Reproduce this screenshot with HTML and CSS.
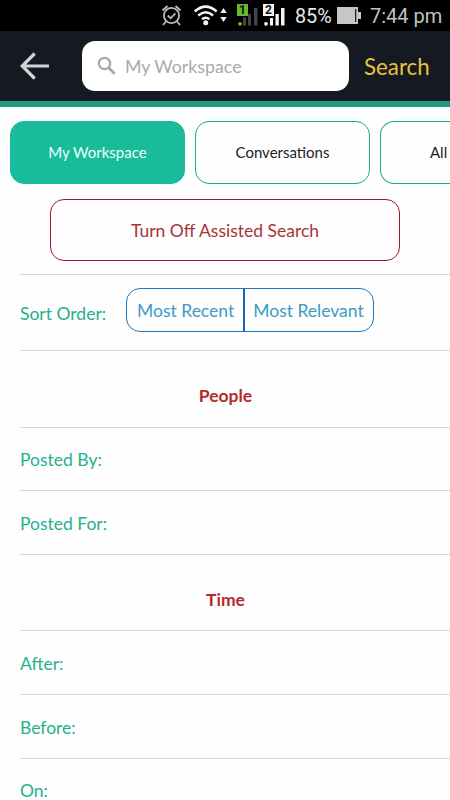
FILE: index.html
```html
<!DOCTYPE html>
<html lang="en">
<head>
<meta charset="utf-8">
<meta name="viewport" content="width=device-width, initial-scale=1">
<title>Search</title>
<link rel="stylesheet" href="styles.css">
</head>
<body>
<div class="status">
  <svg class="status-icons" width="128" height="31" viewBox="160 0 128 31" aria-hidden="true">
    <g fill="none" stroke="#bdbdbd" stroke-width="1.8">
      <circle cx="171.500" cy="15.500" r="7.600"/>
      <path d="M162.500 10.500l5-4.500M180.500 10.500l-5-4.500M166 21.500l-3 3.500M177 21.500l3 3.500M167.800 15.500l2.800 2.800 4.800-5"/>
    </g>
    <g fill="none" stroke="#f4f4f4" stroke-width="2.500">
      <path d="M194.700 11.500q11-9.800 22 0M198.300 15.500q7.400-6.400 14.800 0M202 19.200q3.700-3 7.400 0"/>
    </g>
    <circle cx="205.700" cy="22.700" r="2.500" fill="#f4f4f4"/>
    <path d="M220.300 13l3.200-5 3.200 5zM220.300 17h6.400l-3.200 5z" fill="#f4f4f4"/>
    <path d="M243 17.500h3v8h-3zM248 14h3v11.500h-3zM254 8h3.500v17.500h-3.500z" fill="#454545"/>
    <circle cx="240" cy="23.800" r="1.900" fill="#66b82e"/>
    <path d="M237 4h11v12h-11z" fill="#66b82e"/>
    <path d="M270 18h3v7.500h-3zM275.500 14h3.300v11.500h-3.300zM281 8h3.500v17.500H281z" fill="#f4f4f4"/>
    <circle cx="266" cy="23.800" r="1.900" fill="#f4f4f4"/>
    <path d="M263 4h11v12h-11z" fill="#f4f4f4"/>
    <text class="sim" x="242.500" y="14" text-anchor="middle">1</text>
    <text class="sim" x="268.500" y="14" text-anchor="middle">2</text>
  </svg>
  <span class="percent">85%</span>
  <svg class="battery" width="25" height="17" viewBox="0 0 25 17" aria-hidden="true">
    <path d="M0 0h21v5h3v7h-3v5H0z" fill="#c6c6c6"/>
    <path d="M18 2h1.300v13H18z" fill="#222"/>
  </svg>
  <span class="clock">7:44 pm</span>
</div>
<header class="header">
  <svg class="back" width="30" height="28" viewBox="0 0 30 28" aria-hidden="true">
    <path d="M14.700 1.500L2.200 14l12.500 12.500M2.500 14H29" fill="none" stroke="#d2d3d5" stroke-width="3.200"/>
  </svg>
  <div class="field">
    <svg class="lens" width="20" height="20" viewBox="0 0 20 20" aria-hidden="true">
      <circle cx="7.500" cy="7.500" r="5.700" fill="none" stroke="#a9a9a9" stroke-width="2.300"/>
      <path d="M11.700 11.700l6 6" stroke="#a9a9a9" stroke-width="2.800"/>
    </svg>
    <span class="placeholder">My Workspace</span>
  </div>
  <span class="search">Search</span>
</header>
<nav class="tabs">
  <div class="tab active">My Workspace</div>
  <div class="tab">Conversations</div>
  <div class="tab clipped">All</div>
</nav>
<div class="assist">Turn Off Assisted Search</div>
<main class="list">
  <section class="row sort">
    <span class="sort-label">Sort Order:</span>
    <div class="segments"><span class="segment">Most Recent</span><span class="segment">Most Relevant</span></div>
  </section>
  <h2 class="row title">People</h2>
  <div class="row">Posted By:</div>
  <div class="row">Posted For:</div>
  <h2 class="row title">Time</h2>
  <div class="row">After:</div>
  <div class="row">Before:</div>
  <div class="row last">On:</div>
</main>
</body>
</html>
```
FILE: styles.css
```css
* { box-sizing: border-box; }
body {
  margin: 0;
  width: 450px;
  height: 800px;
  overflow: hidden;
  background: #fefefe;
  font-family: Lato, "Liberation Sans", sans-serif;
  font-size: 17.500px;
  white-space: nowrap;
}
svg { display: block; flex: none; }
.status {
  display: flex;
  align-items: center;
  height: 31px;
  padding-left: 160px;
  background: #000;
  color: #c2c2c2;
  font-family: Roboto, sans-serif;
  font-size: 20px;
}
.sim { font: bold 12px Roboto, sans-serif; fill: #111; }
.percent { width: 42px; margin-left: 7px; padding-top: 2px; color: #e8e8e8; font-size: 19.800px; }
.clock { margin-left: 8px; }
.header {
  display: flex;
  align-items: center;
  height: 76px;
  padding-left: 20px;
  background: #151921;
  border-bottom: 6px solid #209b80;
}
.field {
  display: flex;
  align-items: center;
  width: 267px;
  height: 50px;
  margin-left: 32px;
  padding-left: 15px;
  border-radius: 13px;
  background: #fff;
}
.placeholder { margin-left: 8px; color: #aaa; font-size: 17.800px; }
.search { margin-left: 15px; color: #e8c43c; font-size: 22.300px; }
.tabs { display: flex; gap: 10px; padding: 14px 0 0 10px; }
.tab {
  display: flex;
  flex: none;
  align-items: center;
  justify-content: center;
  width: 175px;
  height: 62.500px;
  border: 1px solid #1fa98b;
  border-radius: 14px;
  color: #222;
  font-size: 15px;
}
.tab.active { background: #1abb9b; border-color: #1abb9b; color: #e9fffa; }
.tab.clipped {
  justify-content: flex-start;
  width: 70px;
  padding-left: 49px;
  border-right: 0;
  border-radius: 14px 0 0 14px;
}
.assist {
  display: flex;
  align-items: center;
  justify-content: center;
  width: 350px;
  height: 62px;
  margin: 15.500px 50px 0;
  border: 1px solid #9b1c1e;
  border-radius: 14px;
  color: #a93436;
}
.list { margin: 13px 0 0 20px; }
.row {
  display: flex;
  align-items: center;
  height: 63.700px;
  padding-top: 2px;
  border-top: 1px solid #d8d8d8;
  color: #24b08d;
}
.last { height: 62px; padding-top: 3px; }
.sort { height: 76px; }
.sort-label { width: 106px; }
.segments {
  display: flex;
  height: 44px;
  margin-top: -7px;
  border: 1px solid #1d78bd;
  border-radius: 14px;
  color: #3c9bc6;
}
.segment { display: flex; align-items: center; padding: 0 9px 0 10px; }
.segment + .segment { padding-left: 8px; border-left: 2px solid #1765b5; }
.title {
  justify-content: center;
  height: 76.500px;
  margin: 0;
  padding: 13px 19px 0 0;
  color: #b22c2c;
  font-size: 17.500px;
  font-weight: 700;
}
```
